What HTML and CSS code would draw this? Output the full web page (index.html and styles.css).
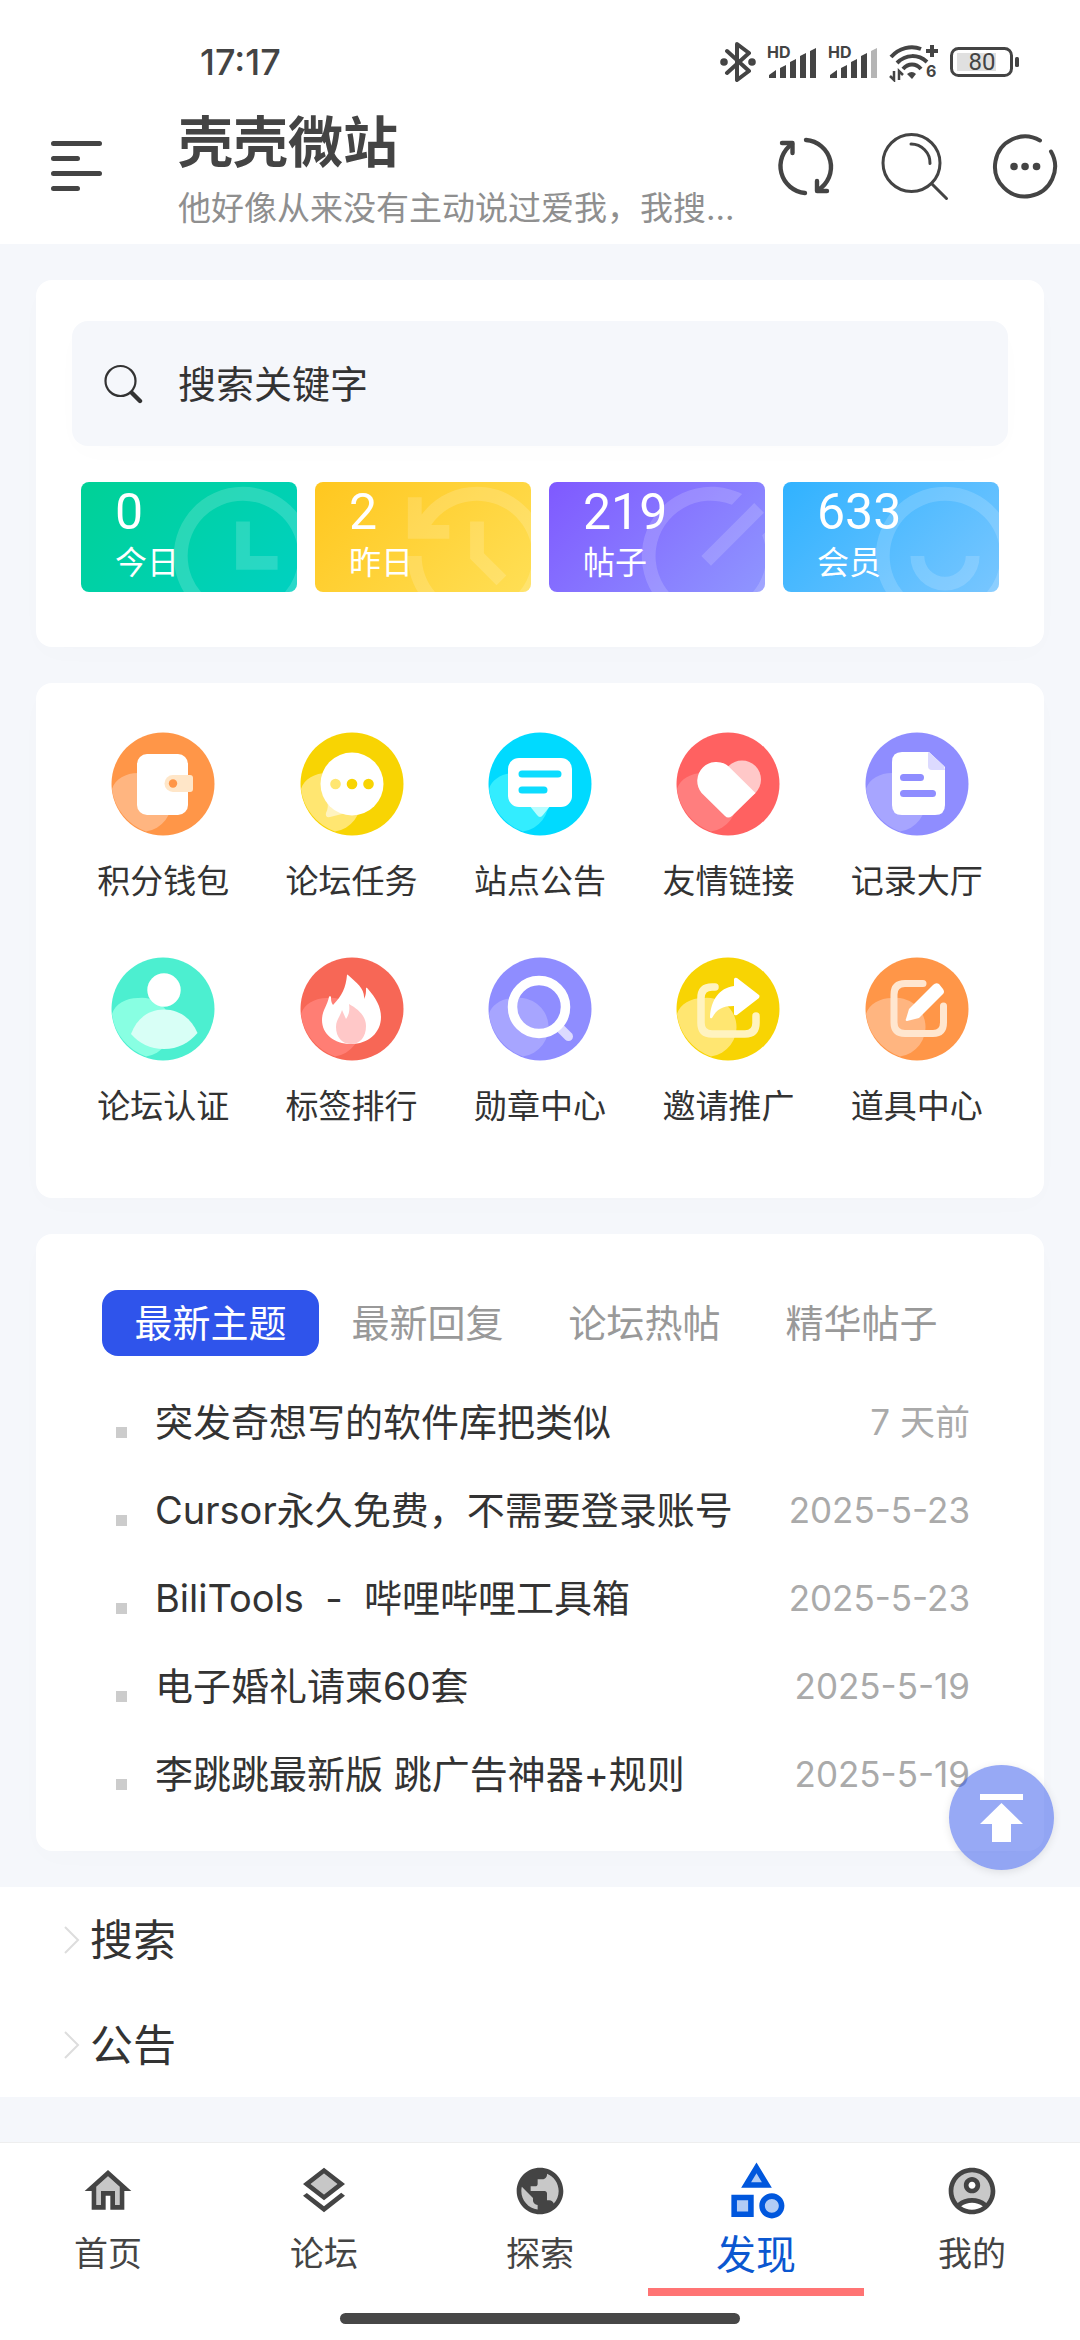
FILE: index.html
```html
<!DOCTYPE html>
<html lang="zh-CN">
<head>
    <meta charset="UTF-8">
    <meta name="viewport" content="width=device-width, initial-scale=1.0">
    <title>壳壳微站</title>
    <link rel="stylesheet" href="styles.css">
</head>
<body>
    <!-- Status bar -->
    <div class="status-bar">
        <span class="clock">17:17</span>
        <div class="status-icons">
            <svg width="36" height="40" viewBox="0 0 36 40" fill="none" stroke="#444" stroke-width="4" stroke-linejoin="round" stroke-linecap="round">
                <path d="M7 9l22 20-12 9V2l12 9L7 31"/>
                <circle cx="4" cy="20" r="1.8"/><circle cx="32" cy="20" r="1.8"/>
            </svg>
            <svg width="50" height="40" viewBox="0 0 50 40" fill="#444">
                <text x="0" y="16" class="hd">HD</text>
                <path d="M2 36v-3l7-5v8zM13 36V26l6-3v13zM23 36V20l6-3v19zM33 36V14l6-3v25zM43 36V9l6-3v30z"/>
            </svg>
            <svg width="50" height="40" viewBox="0 0 50 40" fill="#444">
                <text x="0" y="16" class="hd">HD</text>
                <path d="M2 36v-3l7-5v8zM13 36V26l6-3v13zM23 36V20l6-3v19zM33 36V14l6-3v25z"/>
                <path d="M43 36V9l6-3v30z" fill="#b5b5b5"/>
            </svg>
            <svg width="50" height="40" viewBox="0 0 50 40" fill="none" stroke="#444" stroke-width="4">
                <path d="M2 15C10 6 22 3 32 7M8 21c9-9 21-9 30-1M14 27c5-6 13-6 18 0"/>
                <path d="M37 9h12M43 3v12" />
                <path d="M18 32q5-4 9 0l-4 5z" fill="#444" stroke="none"/>
                <path d="M5 29v9l-4-4M10 38v-9l4 4" stroke-width="2.5"/>
                <text x="37" y="35" class="wifi-gen">6</text>
            </svg>
            <svg width="70" height="40" viewBox="0 0 70 40">
                <rect x="7" y="11" width="39" height="18" fill="#e0e0e0"/>
                <rect x="1.5" y="6.5" width="60" height="27" rx="7" fill="none" stroke="#444" stroke-width="3"/>
                <rect x="65" y="15" width="4" height="10" rx="1.5" fill="#444"/>
                <text x="32" y="28" class="battery-level">80</text>
            </svg>
        </div>
    </div>

    <!-- App bar -->
    <header class="app-bar">
        <button class="menu-btn" aria-label="菜单">
            <svg width="54" height="52" viewBox="0 0 54 52" stroke="#444" stroke-width="5" stroke-linecap="round">
                <path d="M3.5 3.5h46M3.5 18.5h24M3.5 33.5h46M3.5 48.5h24"/>
            </svg>
        </button>
        <div class="site-info">
            <h1>壳壳微站</h1>
            <p>他好像从来没有主动说过爱我，我搜...</p>
        </div>
        <div class="bar-actions">
            <button aria-label="刷新">
                <svg width="72" height="72" viewBox="0 0 72 72" fill="none" stroke="#444" stroke-width="4.4" stroke-linecap="round" stroke-linejoin="round">
                    <path d="M37 10a27 27 0 0 1 12 50M36 63a27 27 0 0 1-13-49"/>
                    <path d="M13 13h10.500v10M58 61H48V51"/>
                </svg>
            </button>
            <button aria-label="搜索">
                <svg width="72" height="72" viewBox="0 0 72 72" fill="none" stroke="#444" stroke-width="3" stroke-linecap="round">
                    <circle cx="32.5" cy="33" r="28.5"/>
                    <path d="M32 14a19 19 0 0 1 19 19.5M53 54l14.5 14.5"/>
                </svg>
            </button>
            <button aria-label="更多">
                <svg width="72" height="72" viewBox="0 0 72 72" fill="none" stroke="#444" stroke-width="4" stroke-linecap="round">
                    <path d="M51 10.5A30 30 0 1 0 62 21.5"/>
                    <path d="M25 36.5h.1M36 36.5h.1M47.5 36.5h.1" stroke-width="7.5"/>
                </svg>
            </button>
        </div>
    </header>

    <main>
        <!-- Search and stats -->
        <section class="card search-card">
            <form class="search-box">
                <label for="keyword" aria-label="搜索关键字">
                    <svg width="40" height="40" viewBox="0 0 40 40" fill="none" stroke="#333" stroke-linecap="round">
                        <circle cx="16.5" cy="17" r="15" stroke-width="2.2"/>
                        <path d="M28 29l8 8" stroke-width="4.4"/>
                    </svg>
                </label>
                <input type="text" id="keyword" placeholder="搜索关键字">
            </form>
            <div class="stats">
                <div class="stat green">
                    <strong>0</strong><span>今日</span>
                    <svg viewBox="0 0 24 24"><path d="M12 22C6.477 22 2 17.523 2 12S6.477 2 12 2s10 4.477 10 10-4.477 10-10 10zm0-2a8 8 0 1 0 0-16 8 8 0 0 0 0 16zm1-8h4v2h-6V7h2v5z"/></svg>
                </div>
                <div class="stat yellow">
                    <strong>2</strong><span>昨日</span>
                    <svg viewBox="0 0 24 24"><path d="M12 2c5.523 0 10 4.477 10 10s-4.477 10-10 10S2 17.523 2 12h2c0 4.418 3.582 8 8 8s8-3.582 8-8-3.582-8-8-8C9.25 4 6.824 5.387 5.385 7.5H8v2H2v-6h2V6c1.824-2.43 4.729-4 8-4zm1 5v4.585l3.243 3.243-1.415 1.415L11 12.413V7h2z"/></svg>
                </div>
                <div class="stat purple">
                    <strong>219</strong><span>帖子</span>
                    <svg viewBox="0 0 24 24"><path d="M12 2c1.6 0 3.15.38 4.5 1.05L15.02 4.6A8 8 0 1 0 19.4 9l1.55-1.45A10 10 0 1 1 12 2zm6.25 2.35l1.4 1.4L12 13.4 10.6 12z"/></svg>
                </div>
                <div class="stat blue">
                    <strong>633</strong><span>会员</span>
                    <svg viewBox="0 0 24 24"><path d="M12 22C6.477 22 2 17.523 2 12S6.477 2 12 2s10 4.477 10 10-4.477 10-10 10zm0-2a8 8 0 1 0 0-16 8 8 0 0 0 0 16zM7 12h2a3 3 0 0 0 6 0h2a5 5 0 0 1-10 0z"/></svg>
                </div>
            </div>
        </section>

        <!-- Shortcuts -->
        <nav class="card shortcuts">
            <a href="#">
                <svg viewBox="0 0 104 104">
                    <circle cx="52" cy="52" r="51.5" fill="#ff9648"/>
                    <path fill="#ffb580" d="M1 57C4 47 15 41 27 41a29 29 0 0 1 8 58.5A51.5 51.5 0 0 1 1 57z"/>
                    <rect x="26" y="22" width="51" height="61" rx="10" fill="#fff"/>
                    <path d="M62 43h17q3 0 3 3v11q0 3-3 3H62a8.5 8.5 0 0 1 0-17z" fill="#ffe6c8"/>
                    <circle cx="62" cy="51.5" r="4.2" fill="#ff9648"/>
                </svg>
                <span>积分钱包</span>
            </a>
            <a href="#">
                <svg viewBox="0 0 104 104">
                    <circle cx="52" cy="52" r="51.5" fill="#f8d403"/>
                    <path fill="#ffe671" d="M1 57C4 47 15 41 27 41a29 29 0 0 1 8 58.5A51.5 51.5 0 0 1 1 57z"/>
                    <path d="M27 70q2 5-1 11-1 5 4 4l16-4z" fill="#fff3c0"/>
                    <circle cx="52" cy="52" r="31.5" fill="#fff"/>
                    <circle cx="35.5" cy="52" r="5.3" fill="#ffe671"/>
                    <circle cx="52" cy="52" r="5.3" fill="#f8d403"/>
                    <circle cx="68.5" cy="52" r="5.3" fill="#f8d403"/>
                </svg>
                <span>论坛任务</span>
            </a>
            <a href="#">
                <svg viewBox="0 0 104 104">
                    <circle cx="52" cy="52" r="51.5" fill="#00daff"/>
                    <path fill="#33edff" d="M1 57C4 47 15 41 27 41a29 29 0 0 1 8 58.5A51.5 51.5 0 0 1 1 57z"/>
                    <path d="M41 73h22l-8 10q-3 4-6 0z" fill="#b8fdff"/>
                    <rect x="20" y="26" width="64" height="49" rx="11" fill="#fff"/>
                    <path d="M34 42h36M34 58h22" stroke="#0cdcff" stroke-width="7" stroke-linecap="round"/>
                </svg>
                <span>站点公告</span>
            </a>
            <a href="#">
                <svg viewBox="0 0 104 104">
                    <circle cx="52" cy="52" r="51.5" fill="#ff6161"/>
                    <path fill="#ff7e7e" d="M1 57C4 47 15 41 27 41a29 29 0 0 1 8 58.5A51.5 51.5 0 0 1 1 57z"/>
                    <circle cx="66" cy="47.5" r="19" fill="#ffc8c8"/>
                    <path d="M25.6 61A19 19 0 0 1 52.4 34.3L79.5 61 56 84q-4 3-7 0z" fill="#fff"/>
                </svg>
                <span>友情链接</span>
            </a>
            <a href="#">
                <svg viewBox="0 0 104 104">
                    <circle cx="52" cy="52" r="51.5" fill="#8f8dff"/>
                    <path fill="#a7a5ff" d="M1 57C4 47 15 41 27 41a29 29 0 0 1 8 58.5A51.5 51.5 0 0 1 1 57z"/>
                    <path d="M37 20h27l16 15v38q0 10-10 10H37q-10 0-10-10V30q0-10 10-10z" fill="#fff"/>
                    <path d="M63 20l2 1 14 13 1 4H67q-4 0-4-4z" fill="#dcdaff"/>
                    <path d="M38.5 45.5h17M38.5 61.5h29" stroke="#8f8dff" stroke-width="7" stroke-linecap="round"/>
                </svg>
                <span>记录大厅</span>
            </a>
            <a href="#">
                <svg viewBox="0 0 104 104">
                    <circle cx="52" cy="52" r="51.5" fill="#4cefd0"/>
                    <path fill="#88ffe2" d="M1 57C4 47 15 41 27 41a29 29 0 0 1 8 58.5A51.5 51.5 0 0 1 1 57z"/>
                    <circle cx="53" cy="33" r="16.7" fill="#fff"/>
                    <path d="M20 77C26 61 38 52.5 53 52.5S80 61 86.500 76C78 86 67 92 53 92s-25-6-33-15z" fill="#d8fff6"/>
                </svg>
                <span>论坛认证</span>
            </a>
            <a href="#">
                <svg viewBox="0 0 104 104">
                    <circle cx="52" cy="52" r="51.5" fill="#f76756"/>
                    <path fill="#ff7e74" d="M1 57C4 47 15 41 27 41a29 29 0 0 1 8 58.5A51.5 51.5 0 0 1 1 57z"/>
                    <path d="M47 18q0-1 1 0c9 8 17 14 16 24 2-4 2-7 2-10 0-2 1-1 2 0 8 9 13 18 13 28 0 16-13 27-30 27S22 77 22 63c0-9 5-14 7-23 0-1 2-1 2 0 0 3 0 5 2 8 9-9 13-18 14-30z" fill="#fff"/>
                    <path d="M49 47c9 5 17 12 17 22 0 11-6 18-15 18s-15-7-15-17c0-7 4-10 6-17l4 9c3-4 4-9 3-15z" fill="#ffc8c8"/>
                </svg>
                <span>标签排行</span>
            </a>
            <a href="#">
                <svg viewBox="0 0 104 104">
                    <circle cx="52" cy="52" r="51.5" fill="#8f8dff"/>
                    <path fill="#a7a5ff" d="M1 57C4 47 15 41 27 41a29 29 0 0 1 8 58.5A51.5 51.5 0 0 1 1 57z"/>
                    <path d="M72 71l8.5 8.5" stroke="#dcdaff" stroke-width="9" stroke-linecap="round"/>
                    <circle cx="51" cy="50" r="26.5" fill="none" stroke="#fff" stroke-width="9.5"/>
                </svg>
                <span>勋章中心</span>
            </a>
            <a href="#">
                <svg viewBox="0 0 104 104">
                    <circle cx="52" cy="52" r="51.5" fill="#f8d403"/>
                    <path fill="#ffe671" d="M1 57C4 47 15 41 27 41a29 29 0 0 1 8 58.5A51.5 51.5 0 0 1 1 57z"/>
                    <path d="M39 30h-3q-11 0-11 11v25q0 11 11 11h33q11 0 11-11v-7" fill="none" stroke="#fff3c0" stroke-width="7.5" stroke-linecap="round"/>
                    <path d="M58 29v-7q1-2 3-1l22 17q1 1 0 3L61 58q-3 1-3-1v-8c-12 0-17 3-22 12q-2 1-2-1c1-17 9-29 24-31z" fill="#fff"/>
                </svg>
                <span>邀请推广</span>
            </a>
            <a href="#">
                <svg viewBox="0 0 104 104">
                    <circle cx="52" cy="52" r="51.5" fill="#ff9648"/>
                    <path fill="#ffb580" d="M1 57C4 47 15 41 27 41a29 29 0 0 1 8 58.5A51.5 51.5 0 0 1 1 57z"/>
                    <path d="M58 26.5H40q-11 0-11 11v28q0 11 11 11h28q10.500 0 10.500-11V49" fill="none" stroke="#ffe6cf" stroke-width="7" stroke-linecap="round"/>
                    <path d="M68 28q3-3 6-1l4 5q2 3 0 5L54 61l-12 3q-2 0-1-2l3-10z" fill="#fff"/>
                </svg>
                <span>道具中心</span>
            </a>
        </nav>

        <!-- Topics -->
        <section class="card topics">
            <div class="tabs" role="tablist">
                <button class="active" role="tab" aria-selected="true">最新主题</button>
                <button role="tab">最新回复</button>
                <button role="tab">论坛热帖</button>
                <button role="tab">精华帖子</button>
            </div>
            <ul class="topic-list">
                <li><a href="#">突发奇想写的软件库把类似</a><time>7 天前</time></li>
                <li><a href="#">Cursor永久免费，不需要登录账号</a><time>2025-5-23</time></li>
                <li><a href="#">BiliTools&nbsp; -&nbsp; 哔哩哔哩工具箱</a><time>2025-5-23</time></li>
                <li><a href="#">电子婚礼请柬60套</a><time>2025-5-19</time></li>
                <li><a href="#">李跳跳最新版 跳广告神器+规则</a><time>2025-5-19</time></li>
            </ul>
        </section>

        <!-- More links -->
        <div class="link-rows">
            <a href="#"><svg width="16" height="28" viewBox="0 0 16 28"><path d="M1 1l13 13L1 27" fill="none" stroke="#ddd" stroke-width="2"/></svg>搜索</a>
            <a href="#"><svg width="16" height="28" viewBox="0 0 16 28"><path d="M1 1l13 13L1 27" fill="none" stroke="#ddd" stroke-width="2"/></svg>公告</a>
        </div>
    </main>

    <!-- Back to top -->
    <button class="to-top" aria-label="返回顶部">
        <svg width="44" height="50" viewBox="0 0 44 50" fill="#fff"><path d="M0 1h43v6H0zM21.5 10L43 31H31v18H12V31H0z"/></svg>
    </button>

    <!-- Bottom navigation -->
    <footer class="bottom-nav">
        <nav>
            <a href="#">
                <svg viewBox="0 0 24 24"><path d="M7 10.19V18h2v-6h6v6h2v-7.81l-5-4.5z" opacity=".3"/><path d="M12 3L2 12h3v8h6v-6h2v6h6v-8h3L12 3zm5 15h-2v-6H9v6H7v-7.81l5-4.5 5 4.5V18z"/></svg>
                <span>首页</span>
            </a>
            <a href="#">
                <svg viewBox="0 0 24 24"><path d="M6.26 9L12 13.47 17.74 9 12 4.53z" opacity=".3"/><path d="M12 18.54l-7.37-5.73L3 14.07l9 7 9-7-1.63-1.27zM12 16l7.36-5.73L21 9l-9-7-9 7 1.63 1.27L12 16zm0-11.47L17.74 9 12 13.47 6.26 9 12 4.53z"/></svg>
                <span>论坛</span>
            </a>
            <a href="#">
                <svg viewBox="0 0 24 24"><circle cx="12" cy="12" r="9" fill="#c8c8c8"/><path d="M12 2C6.48 2 2 6.48 2 12s4.48 10 10 10 10-4.48 10-10S17.52 2 12 2zM4 12c0-.61.08-1.21.21-1.78L8.99 15v1c0 1.1.9 2 2 2v1.93C7.06 19.43 4 16.07 4 12zm13.89 5.4c-.26-.81-1-1.4-1.9-1.4h-1v-3c0-.55-.45-1-1-1h-6v-2h2c.55 0 1-.45 1-1V7h2c1.1 0 2-.9 2-2v-.41C17.92 5.77 20 8.65 20 12c0 2.08-.81 3.98-2.11 5.4z"/></svg>
                <span>探索</span>
            </a>
            <a href="#" class="active">
                <svg viewBox="0 0 24 24"><path d="M12 5l-3.5 5.5h7zM4 14.5h6v6H4zM17.5 13.5a4 4 0 1 0 0 8 4 4 0 0 0 0-8z" opacity=".3"/><path d="M12 2l-5.5 9h11L12 2zm0 3.84L13.93 9h-3.87L12 5.84zM17.5 13c-2.49 0-4.5 2.01-4.5 4.5s2.01 4.5 4.5 4.5 4.5-2.01 4.5-4.5-2.01-4.5-4.5-4.5zm0 7c-1.38 0-2.5-1.12-2.5-2.5s1.12-2.5 2.5-2.5 2.5 1.12 2.5 2.5-1.12 2.5-2.5 2.5zM3 21.5h8v-8H3v8zm2-6h4v4H5v-4z"/></svg>
                <span>发现</span>
            </a>
            <a href="#">
                <svg viewBox="0 0 24 24"><circle cx="12" cy="12" r="9" fill="#c8c8c8"/><circle cx="12" cy="9.5" r="2.5" fill="#fff"/><ellipse cx="12" cy="18.5" rx="5.5" ry="2" fill="#fff"/><path d="M12 2C6.48 2 2 6.48 2 12s4.48 10 10 10 10-4.48 10-10S17.52 2 12 2zM7.35 18.5C8.66 17.56 10.26 17 12 17s3.34.56 4.65 1.5C15.34 19.44 13.74 20 12 20s-3.34-.56-4.65-1.5zm10.79-1.38C16.45 15.8 14.32 15 12 15s-4.45.8-6.14 2.12C4.7 15.73 4 13.95 4 12c0-4.42 3.58-8 8-8s8 3.58 8 8c0 1.95-.7 3.73-1.86 5.12z"/><path d="M12 6c-1.93 0-3.5 1.57-3.5 3.5S10.07 13 12 13s3.5-1.57 3.5-3.5S13.93 6 12 6zm0 5c-.83 0-1.5-.67-1.5-1.5S11.17 8 12 8s1.5.67 1.5 1.5S12.83 11 12 11z"/></svg>
                <span>我的</span>
            </a>
        </nav>
        <div class="home-indicator"></div>
    </footer>
</body>
</html>
```
FILE: styles.css
```css
/* Basic Reset */
* {
    box-sizing: border-box;
    margin: 0;
    padding: 0;
}

body {
    background-color: #f5f7fb;
    color: #333;
    font-family: Inter, "Noto Sans CJK SC", sans-serif;
    font-size: 38px;
    line-height: 54px;
    min-height: 100vh;
    padding-bottom: 198px;
}

a {
    color: inherit;
    text-decoration: none;
}

button {
    background: none;
    border: none;
    font: inherit;
    color: inherit;
    cursor: pointer;
}

svg {
    display: block;
    flex-shrink: 0;
}

/* Status bar */
.status-bar {
    display: flex;
    align-items: center;
    justify-content: space-between;
    height: 88px;
    padding: 36px 60px 0 200px;
    background: #fff;
    color: #444;
}

.clock {
    font-size: 36px;
    font-weight: 500;
    line-height: 52px;
}

.status-icons {
    display: flex;
    align-items: center;
    gap: 11px;
}

.hd {
    font-size: 16px;
    font-weight: 700;
}

.wifi-gen {
    font-size: 16px;
    font-weight: 700;
    fill: #444;
    stroke: none;
}

.battery-level {
    font-family: Roboto, sans-serif;
    font-size: 24px;
    fill: #444;
    text-anchor: middle;
}

/* App bar */
.app-bar {
    display: flex;
    align-items: center;
    height: 156px;
    background: #fff;
}

.menu-btn {
    margin-left: 50px;
}

.site-info {
    flex: 1;
    min-width: 0;
    margin-left: 74px;
    padding-top: 18px;
}

.site-info h1 {
    color: #444;
    font-size: 55px;
    font-weight: 700;
    line-height: 66px;
}

.site-info p {
    color: #8f8f8f;
    font-size: 33px;
    line-height: 66px;
    white-space: nowrap;
}

.bar-actions {
    display: flex;
}

.bar-actions button {
    display: flex;
    justify-content: center;
    width: 110px;
}

/* Cards */
.card {
    margin: 36px;
    background: #fff;
    border-radius: 16px;
    box-shadow: 0 8px 30px rgba(0, 0, 0, 0.01);
}

.search-card {
    padding: 41px 36px 55px;
}

.search-box {
    display: flex;
    align-items: center;
    height: 125px;
    padding: 0 32px;
    background: #f5f7fb;
    border-radius: 16px;
    box-shadow: 0 8px 30px rgba(0, 0, 0, 0.01);
}

.search-box input {
    flex: 1;
    min-width: 0;
    margin-left: 34px;
    border: none;
    outline: none;
    background: none;
    color: #333;
    font: inherit;
}

.search-box input::placeholder {
    color: #333;
    opacity: 1;
}

/* Stats */
.stats {
    display: grid;
    grid-template-columns: repeat(4, 1fr);
    gap: 18px;
    margin: 36px 9px 0;
}

.stat {
    position: relative;
    display: flex;
    flex-direction: column;
    height: 110px;
    padding-left: 34px;
    overflow: hidden;
    border-radius: 8px;
    color: #fff;
}

.stat strong {
    font-family: Roboto, sans-serif;
    font-size: 50px;
    font-weight: 400;
    line-height: 60px;
}

.stat span {
    font-size: 32px;
    line-height: 42px;
}

.stat svg {
    position: absolute;
    top: -9px;
    right: -29px;
    width: 166px;
    height: 166px;
    fill: rgba(255, 255, 255, 0.16);
}

.green { background: linear-gradient(135deg, #00d196, #00d1c1); }
.yellow { background: linear-gradient(135deg, #ffc71f, #ffdf55); }
.purple { background: linear-gradient(135deg, #7f59ff, #8f96ff); }
.blue { background: linear-gradient(135deg, #30b2ff, #78c6ff); }

/* Shortcuts */
.shortcuts {
    display: grid;
    grid-template-columns: repeat(5, 1fr);
    row-gap: 54px;
    padding: 49px 33px 70px;
}

.shortcuts a {
    display: flex;
    flex-direction: column;
    align-items: center;
    gap: 23px;
    font-size: 33px;
    line-height: 44px;
}

.shortcuts svg {
    width: 104px;
    height: 104px;
}

/* Topics */
.topics {
    padding: 56px 66px 33px;
}

.tabs {
    display: flex;
    margin-bottom: 22px;
    color: #999;
}

.tabs button {
    width: 217px;
    line-height: 66px;
    border-radius: 16px;
}

.tabs .active {
    background: #2f54eb;
    color: #fff;
}

.topic-list {
    list-style: none;
    padding: 0 8px 0 14px;
}

.topic-list li {
    display: flex;
    align-items: center;
    height: 88px;
}

.topic-list li::before {
    content: "";
    width: 11px;
    height: 11px;
    margin: 20px 28px 0 0;
    background: #ccc;
}

.topic-list a {
    flex: 1;
    min-width: 0;
    white-space: nowrap;
}

.topic-list time {
    color: #aaa;
    font-size: 35px;
}

/* Link rows */
.link-rows {
    background: #fff;
}

.link-rows a {
    display: flex;
    align-items: center;
    gap: 10px;
    height: 105px;
    padding-left: 64px;
    font-size: 43px;
}

/* Back to top */
.to-top {
    position: fixed;
    right: 26px;
    bottom: 470px;
    display: flex;
    align-items: center;
    justify-content: center;
    width: 105px;
    height: 105px;
    border-radius: 50%;
    background: rgba(47, 84, 235, 0.5);
    box-shadow: 0 2px 8px rgba(0, 0, 0, 0.1);
}

/* Bottom navigation */
.bottom-nav {
    position: fixed;
    left: 0;
    right: 0;
    bottom: 0;
    height: 198px;
    background: #fff;
    border-top: 1px solid #eee;
    color: #444;
}

.bottom-nav nav {
    display: grid;
    grid-template-columns: repeat(5, 1fr);
}

.bottom-nav nav a {
    display: flex;
    flex-direction: column;
    align-items: center;
    height: 153px;
    padding-top: 20px;
    border-bottom: 8px solid transparent;
    font-size: 34px;
    line-height: 70px;
}

.bottom-nav nav svg {
    width: 56px;
    height: 56px;
    fill: currentColor;
}

.bottom-nav nav .active {
    padding-top: 14px;
    border-color: #ff7474;
    color: #0b57d0;
    font-size: 40px;
    line-height: 62px;
}

.bottom-nav nav .active svg {
    width: 67px;
    height: 67px;
    fill: #0057dd;
}

.home-indicator {
    width: 37%;
    height: 11px;
    margin: 17px auto 0;
    border-radius: 6px;
    background: #474747;
}
```
